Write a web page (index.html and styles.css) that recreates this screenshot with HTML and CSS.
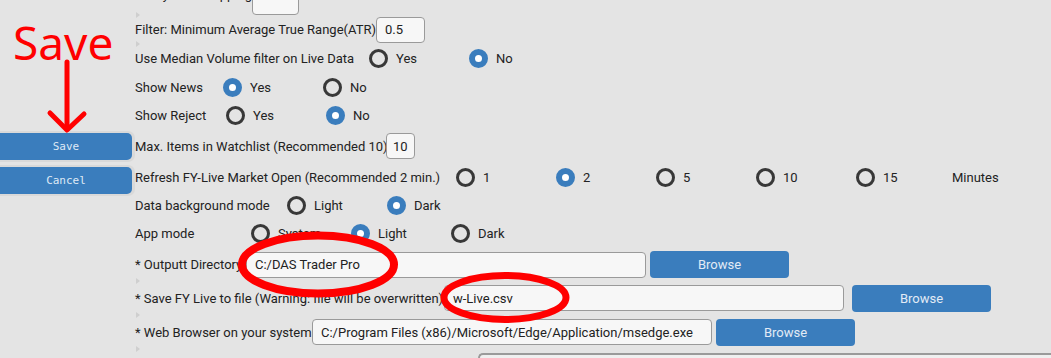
FILE: index.html
```html
<!DOCTYPE html>
<html lang="en">
<head>
    <meta charset="UTF-8">
    <title>FY Live - Settings</title>
    <link rel="stylesheet" href="styles.css">
</head>
<body>
    <div class="page">
        <div class="sidebar">
            <button class="side-btn">Save</button>
            <button class="side-btn">Cancel</button>
        </div>

        <div class="settings">
            <div class="row r0 mark">
                <span class="label w-map">Symbol Mapping</span>
                <input class="field f-small" type="text" value="">
            </div>
            <div class="row r1 mark">
                <span class="label w-atr">Filter: Minimum Average True Range(ATR)</span>
                <input class="field f-atr" type="text" value="0.5">
            </div>
            <div class="row r2">
                <span class="label w-median">Use Median Volume filter on Live Data</span>
                <span class="opt"><span class="radio"></span>Yes</span>
                <span class="opt"><span class="radio on"></span>No</span>
            </div>
            <div class="row r3">
                <span class="label w-news">Show News</span>
                <span class="opt"><span class="radio on"></span>Yes</span>
                <span class="opt"><span class="radio"></span>No</span>
            </div>
            <div class="row r4">
                <span class="label w-reject">Show Reject</span>
                <span class="opt"><span class="radio"></span>Yes</span>
                <span class="opt"><span class="radio on"></span>No</span>
            </div>
            <div class="row r5">
                <span class="label w-max">Max. Items in Watchlist (Recommended 10)</span>
                <input class="field f-max" type="text" value="10">
            </div>
            <div class="row r6">
                <span class="label w-refresh">Refresh FY-Live Market Open (Recommended 2 min.)</span>
                <span class="opt"><span class="radio"></span>1</span>
                <span class="opt"><span class="radio on"></span>2</span>
                <span class="opt"><span class="radio"></span>5</span>
                <span class="opt"><span class="radio"></span>10</span>
                <span class="opt"><span class="radio"></span>15</span>
                <span class="unit">Minutes</span>
            </div>
            <div class="row r7">
                <span class="label w-bg">Data background mode</span>
                <span class="opt"><span class="radio"></span>Light</span>
                <span class="opt"><span class="radio on"></span>Dark</span>
            </div>
            <div class="row r8">
                <span class="label w-app">App mode</span>
                <span class="opt"><span class="radio"></span>System</span>
                <span class="opt"><span class="radio on"></span>Light</span>
                <span class="opt"><span class="radio"></span>Dark</span>
            </div>
            <div class="row r9 mark">
                <span class="label w-out">* Outputt Directory</span>
                <input class="field f-path" type="text" value="C:/DAS Trader Pro">
                <button class="browse">Browse</button>
            </div>
            <div class="row r10 mark">
                <span class="label w-file">* Save FY Live to file (Warning: file will be overwritten)</span>
                <input class="field f-path" type="text" value="w-Live.csv">
                <button class="browse wide-gap">Browse</button>
            </div>
            <div class="row r11 mark">
                <span class="label w-web">* Web Browser on your system</span>
                <input class="field f-path" type="text" value="C:/Program Files (x86)/Microsoft/Edge/Application/msedge.exe">
                <button class="browse">Browse</button>
            </div>
            <div class="next-box"></div>
        </div>

        <!-- red markup drawn over the screenshot -->
        <div class="note-text">Save</div>
        <svg class="notes" width="1051" height="358" viewBox="0 0 1051 358">
            <g fill="none" stroke="#ff0000" stroke-linecap="round" stroke-linejoin="round">
                <path d="M67 62 L67 129" stroke-width="5"/>
                <path d="M50 113 L67 130 L84 114" stroke-width="5"/>
                <ellipse cx="318" cy="264.5" rx="76" ry="29" stroke-width="8"/>
                <ellipse cx="505" cy="297.5" rx="61" ry="22" stroke-width="7"/>
            </g>
        </svg>
    </div>
</body>
</html>
```

FILE: styles.css
```css
body {
    margin: 0;
    background: #e4e4e4;
    font-family: Roboto, "Liberation Sans", sans-serif;
    font-size: 13px;
    color: #222;
    overflow: hidden;
}

.page {
    position: relative;
    display: flex;
    width: 1051px;
    height: 358px;
    overflow: hidden;
}

.sidebar {
    width: 132px;
    flex-shrink: 0;
    padding-top: 133px;
    display: flex;
    flex-direction: column;
    gap: 7px;
    margin-right: 3px;
}

.side-btn {
    height: 27px;
    width: 132px;
    border: none;
    border-radius: 0 5px 5px 0;
    background: #3a7dbd;
    color: #dfe9f5;
    font-family: "DejaVu Sans Mono", monospace;
    font-size: 11px;
    box-shadow: 1px 0 0 2px #d9d9d9;
    padding: 0;
}

.settings {
    flex: 1;
    display: flex;
    flex-direction: column;
    margin-top: -11px;
}

.row {
    position: relative;
    display: flex;
    align-items: center;
    white-space: nowrap;
    flex-shrink: 0;
}

.mark::after {
    content: "";
    position: absolute;
    left: 1px;
    bottom: -3px;
    border-left: 4px solid #cfcfcf;
    border-top: 3px solid transparent;
    border-bottom: 3px solid transparent;
}

.r0 { height: 26px; }
.r1 { height: 29px; }
.r2 { height: 29px; }
.r3 { height: 28px; }
.r4 { height: 29px; }
.r5 { height: 32px; }
.r6 { height: 30px; }
.r7 { height: 27px; }
.r8 { height: 29px; }
.r9 { height: 33px; }
.r10 { height: 34px; }
.r11 { height: 34px; }

.label { display: inline-block; flex-shrink: 0; }
.w-map { width: 117px; text-align: right; margin-top: -15px; }
.w-atr { width: 241px; }
.w-median { width: 234px; }
.w-news { width: 88px; }
.w-reject { width: 91px; }
.w-max { width: 251px; }
.w-refresh { width: 321px; }
.w-bg { width: 152px; }
.w-app { width: 116px; }
.w-out { width: 111px; }
.w-file { width: 309px; }
.w-web { width: 177px; }

.opt {
    width: 100px;
    display: flex;
    align-items: center;
    flex-shrink: 0;
}

.radio {
    width: 13px;
    height: 13px;
    border: 3px solid #383838;
    border-radius: 50%;
    margin-right: 8px;
    flex-shrink: 0;
}

.radio.on {
    border: 6px solid #3a7dbd;
    width: 7px;
    height: 7px;
    background: #fff;
}

.unit { margin-left: -4px; }

.field {
    height: 26px;
    box-sizing: border-box;
    border: 1.5px solid #9a9a9a;
    border-radius: 4px;
    background: #f7f7f7;
    font-family: Roboto, "Liberation Sans", sans-serif;
    font-size: 13px;
    color: #222;
    padding: 0 8px;
    margin: 0;
    flex-shrink: 0;
}

.f-small { width: 47px; }
.f-atr { width: 49px; }
.f-max { width: 29px; padding: 0 6px; }
.f-path { width: 400px; }

.browse {
    height: 27px;
    width: 139px;
    margin: 0 0 0 4px;
    border: none;
    border-radius: 4px;
    background: #3a7dbd;
    color: #e2ebf6;
    font-family: Roboto, "Liberation Sans", sans-serif;
    font-size: 13px;
    flex-shrink: 0;
}

.browse.wide-gap { margin-left: 8px; }

.next-box {
    margin: 4px 0 0 343px;
    height: 20px;
    flex-shrink: 0;
    border-top: 2px solid #9a9a9a;
    border-left: 2px solid #9a9a9a;
    border-radius: 5px 0 0 0;
    background: #efefef;
}

.note-text {
    position: absolute;
    left: 13px;
    top: 13px;
    color: #ff0000;
    font-family: "Noto Sans", "Open Sans", sans-serif;
    font-size: 46px;
    line-height: 58px;
}

.notes {
    position: absolute;
    left: 0;
    top: 0;
    pointer-events: none;
}
```
